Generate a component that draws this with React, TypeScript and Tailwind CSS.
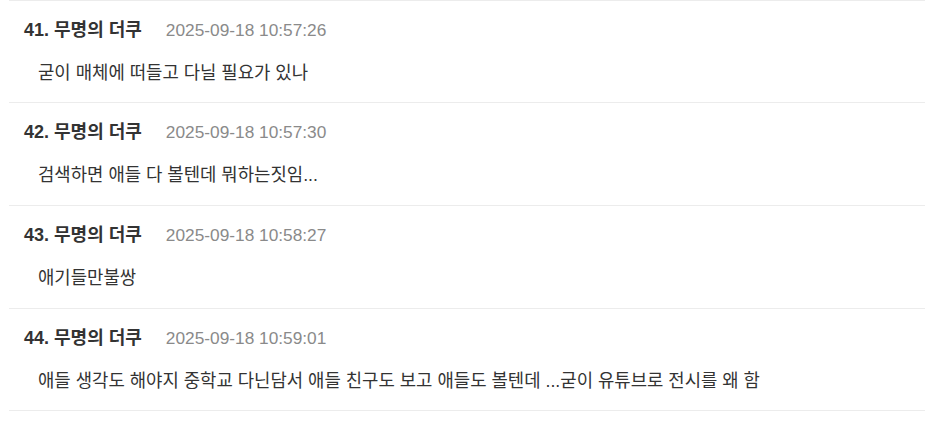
import React from "react";

const rows = [
  { n: "41.", d: "2025-09-18 10:57:26", c: "굳이 매체에 떠들고 다닐 필요가 있나", h: "h-[102px]" },
  { n: "42.", d: "2025-09-18 10:57:30", c: "검색하면 애들 다 볼텐데 뭐하는짓임...", h: "h-[103px]" },
  { n: "43.", d: "2025-09-18 10:58:27", c: "애기들만불쌍", h: "h-[103px]" },
  { n: "44.", d: "2025-09-18 10:59:01", c: "애들 생각도 해야지 중학교 다닌담서 애들 친구도 보고 애들도 볼텐데 ...굳이 유튜브로 전시를 왜 함", h: "h-[102px]" },
];

export default function App() {
  return (
    <div
      className="w-[925px] h-[431px] bg-white overflow-hidden pl-[9px]"
      style={{ fontFamily: '"Liberation Sans", "Noto Sans CJK KR", sans-serif' }}
    >
      {rows.map((r) => (
        <div key={r.n} className={`border-t border-[#ececec] ${r.h} pl-[15px] pt-[16px]`}>
          <div className="flex items-baseline h-[25px]">
            <span className="text-[18px] font-bold text-[#333]">{r.n} 무명의 더쿠</span>
            <span className="ml-[24px] text-[17.3px] text-[#8a8a8a]">{r.d}</span>
          </div>
          <div className="mt-[18px] pl-[14px] text-[17.8px] text-[#333] leading-[26px]">{r.c}</div>
        </div>
      ))}
      <div className="border-t border-[#ececec]" />
    </div>
  );
}
